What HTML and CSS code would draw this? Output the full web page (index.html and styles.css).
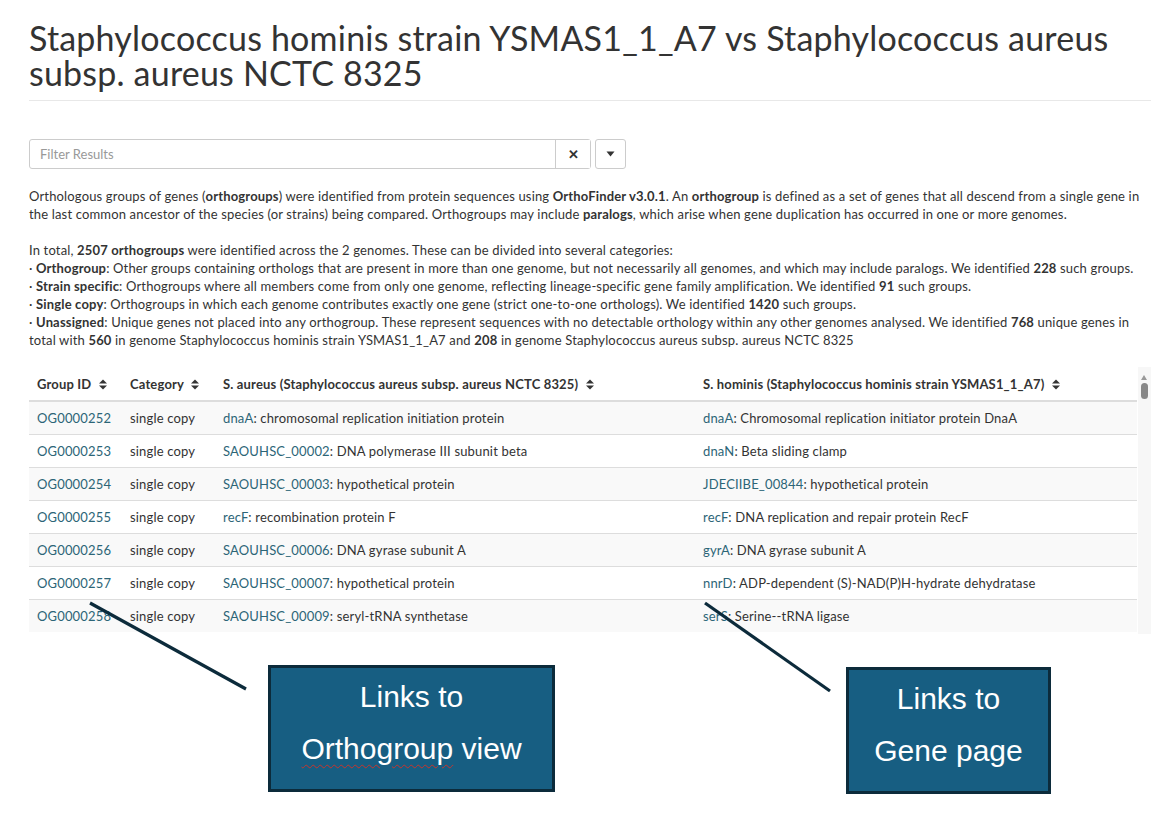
FILE: index.html
```html
<!DOCTYPE html>
<html lang="en">
<head>
  <meta charset="UTF-8">
  <title>Orthogroups comparison</title>
  <link rel="stylesheet" href="styles.css">
</head>
<body>
  <div class="page">
    <h1 class="title">Staphylococcus hominis strain YSMAS1_1_A7 vs Staphylococcus aureus subsp. aureus NCTC 8325</h1>

    <div class="filter-row">
      <div class="filter-box">
        <input type="text" placeholder="Filter Results">
        <button class="clear-btn">&#x2715;</button>
      </div>
      <button class="menu-btn">
        <svg width="9" height="6" viewBox="0 0 9 6"><path d="M0.5 0.5h8L4.5 5.5z" fill="#333"/></svg>
      </button>
    </div>

    <p class="intro">
      Orthologous groups of genes (<b>orthogroups</b>) were identified from protein sequences using <b>OrthoFinder v3.0.1</b>. An <b>orthogroup</b> is defined as a set of genes that all descend from a single gene in the last common ancestor of the species (or strains) being compared. Orthogroups may include <b>paralogs</b>, which arise when gene duplication has occurred in one or more genomes.
    </p>

    <p class="intro">
      In total, <b>2507 orthogroups</b> were identified across the 2 genomes. These can be divided into several categories:<br>
      &middot; <b>Orthogroup</b>: Other groups containing orthologs that are present in more than one genome, but not necessarily all genomes, and which may include paralogs. We identified <b>228</b> such groups.<br>
      &middot; <b>Strain specific</b>: Orthogroups where all members come from only one genome, reflecting lineage-specific gene family amplification. We identified <b>91</b> such groups.<br>
      &middot; <b>Single copy</b>: Orthogroups in which each genome contributes exactly one gene (strict one-to-one orthologs). We identified <b>1420</b> such groups.<br>
      &middot; <b>Unassigned</b>: Unique genes not placed into any orthogroup. These represent sequences with no detectable orthology within any other genomes analysed. We identified <b>768</b> unique genes in total with <b>560</b> in genome Staphylococcus hominis strain YSMAS1_1_A7 and <b>208</b> in genome Staphylococcus aureus subsp. aureus NCTC 8325
    </p>

    <div class="table-wrap">
      <table class="groups">
        <thead>
          <tr>
            <th class="c-id">Group ID <span class="sort"></span></th>
            <th class="c-cat">Category <span class="sort"></span></th>
            <th class="c-sa">S. aureus (Staphylococcus aureus subsp. aureus NCTC 8325) <span class="sort"></span></th>
            <th>S. hominis (Staphylococcus hominis strain YSMAS1_1_A7) <span class="sort"></span></th>
          </tr>
        </thead>
        <tbody>
          <tr><td><a href="#">OG0000252</a></td><td>single copy</td><td><a href="#">dnaA</a>: chromosomal replication initiation protein</td><td><a href="#">dnaA</a>: Chromosomal replication initiator protein DnaA</td></tr>
          <tr><td><a href="#">OG0000253</a></td><td>single copy</td><td><a href="#">SAOUHSC_00002</a>: DNA polymerase III subunit beta</td><td><a href="#">dnaN</a>: Beta sliding clamp</td></tr>
          <tr><td><a href="#">OG0000254</a></td><td>single copy</td><td><a href="#">SAOUHSC_00003</a>: hypothetical protein</td><td><a href="#">JDECIIBE_00844</a>: hypothetical protein</td></tr>
          <tr><td><a href="#">OG0000255</a></td><td>single copy</td><td><a href="#">recF</a>: recombination protein F</td><td><a href="#">recF</a>: DNA replication and repair protein RecF</td></tr>
          <tr><td><a href="#">OG0000256</a></td><td>single copy</td><td><a href="#">SAOUHSC_00006</a>: DNA gyrase subunit A</td><td><a href="#">gyrA</a>: DNA gyrase subunit A</td></tr>
          <tr><td><a href="#">OG0000257</a></td><td>single copy</td><td><a href="#">SAOUHSC_00007</a>: hypothetical protein</td><td><a href="#">nnrD</a>: ADP-dependent (S)-NAD(P)H-hydrate dehydratase</td></tr>
          <tr><td><a href="#">OG0000258</a></td><td>single copy</td><td><a href="#">SAOUHSC_00009</a>: seryl-tRNA synthetase</td><td><a href="#">serS</a>: Serine--tRNA ligase</td></tr>
        </tbody>
      </table>
      <div class="scrollbar"><span class="scroll-up"></span><span class="scroll-thumb"></span></div>
    </div>
  </div>

  <!-- callouts drawn over the screenshot -->
  <svg class="pointers" width="1164" height="827">
    <line x1="90" y1="603" x2="246" y2="689"/>
    <line x1="705" y1="603" x2="830" y2="691"/>
  </svg>
  <div class="callout callout-og">
    <span>Links to</span>
    <span><span class="squiggle">Orthogroup</span> view</span>
  </div>
  <div class="callout callout-gene">
    <span>Links to</span>
    <span>Gene page</span>
  </div>
</body>
</html>
```

FILE: styles.css
```css
body {
  margin: 0;
  font-family: Lato, "Open Sans", sans-serif;
  color: #333;
  background: #fff;
}

.page {
  padding: 20px 13px 0 29px;
}

.title {
  margin: 0;
  padding-bottom: 10px;
  border-bottom: 1px solid #e8e8e8;
  font-size: 34px;
  line-height: 35px;
  letter-spacing: 0.2px;
  font-weight: 400;
  color: #333;
}

.filter-row {
  display: flex;
  gap: 4px;
  margin-top: 38px;
}
.filter-box {
  display: flex;
  width: 562px;
  height: 30px;
  box-sizing: border-box;
  border: 1px solid #ccc;
  border-radius: 3px;
}
.filter-box input {
  flex: 1;
  border: none;
  outline: none;
  padding: 0 10px;
  font-family: inherit;
  font-size: 13px;
  color: #333;
  background: transparent;
}
.filter-box input::placeholder {
  color: #999;
}
.clear-btn {
  width: 35px;
  border: none;
  border-left: 1px solid #ccc;
  background: #fff;
  font-size: 13px;
  font-weight: 700;
  color: #333;
  padding: 0;
}
.menu-btn {
  width: 31px;
  height: 30px;
  border: 1px solid #ccc;
  border-radius: 3px;
  background: #fff;
  padding: 0;
  display: flex;
  align-items: center;
  justify-content: center;
}

.intro {
  margin: 18px 0 0;
  font-size: 13px;
  line-height: 18px;
  letter-spacing: 0.16px;
  color: #333;
}
.intro b {
  font-weight: 700;
}

.table-wrap {
  position: relative;
  margin-top: 18px;
  height: 267px;
  overflow: hidden;
  padding-right: 14px;
}

/* fake scroll track, the page's own scrollbar */
.scrollbar {
  position: absolute;
  top: 0;
  right: 0;
  bottom: 0;
  width: 13px;
  background: #f7f7f7;
}
.scroll-up {
  position: absolute;
  top: 8px;
  left: 3px;
  border-left: 3.5px solid transparent;
  border-right: 3.5px solid transparent;
  border-bottom: 5px solid #999;
}
.scroll-thumb {
  position: absolute;
  top: 16px;
  left: 3px;
  width: 7px;
  height: 16px;
  border-radius: 4px;
  background: #888;
}

.groups {
  width: 100%;
  border-collapse: collapse;
  font-size: 13px;
  letter-spacing: 0.16px;
}
.groups th {
  text-align: left;
  font-weight: 700;
  padding: 9px 8px 8px;
  height: 16px;
  border-bottom: 2px solid #ddd;
  white-space: nowrap;
}
.groups td {
  padding: 0 8px;
  height: 32px;
  border-top: 1px solid #ddd;
  white-space: nowrap;
}
.groups tbody tr:nth-child(odd) {
  background: #f9f9f9;
}
.c-id { width: 77px; }
.c-cat { width: 77px; }
.c-sa { width: 464px; }

.groups a {
  color: #2c6577;
  text-decoration: none;
}

.sort {
  display: inline-block;
  width: 8px;
  height: 11px;
  margin-left: 4px;
  vertical-align: -1px;
  background: url("data:image/svg+xml,%3Csvg xmlns='http://www.w3.org/2000/svg' width='8' height='11'%3E%3Cpath d='M0 4.5L4 0.5 8 4.5zM0 6.5h8L4 10.5z' fill='%23333'/%3E%3C/svg%3E") no-repeat;
}

/* annotation overlay */
.pointers {
  position: absolute;
  top: 0;
  left: 0;
  pointer-events: none;
}
.pointers line {
  stroke: #0c2b3b;
  stroke-width: 3.2;
}
.callout {
  position: absolute;
  box-sizing: border-box;
  background: #175e82;
  border: 3px solid #0c2b3b;
  color: #fff;
  font-family: "Liberation Sans", Arial, sans-serif;
  font-size: 30px;
  line-height: 52px;
  display: flex;
  flex-direction: column;
  align-items: center;
  padding-top: 3px;
}
.callout-og {
  left: 268px;
  top: 665px;
  width: 287px;
  height: 127px;
}
.callout-gene {
  left: 846px;
  top: 667px;
  width: 205px;
  height: 127px;
}
.squiggle {
  text-decoration: underline wavy #c8332b;
  text-decoration-thickness: 1px;
  text-underline-offset: 5px;
}
```
